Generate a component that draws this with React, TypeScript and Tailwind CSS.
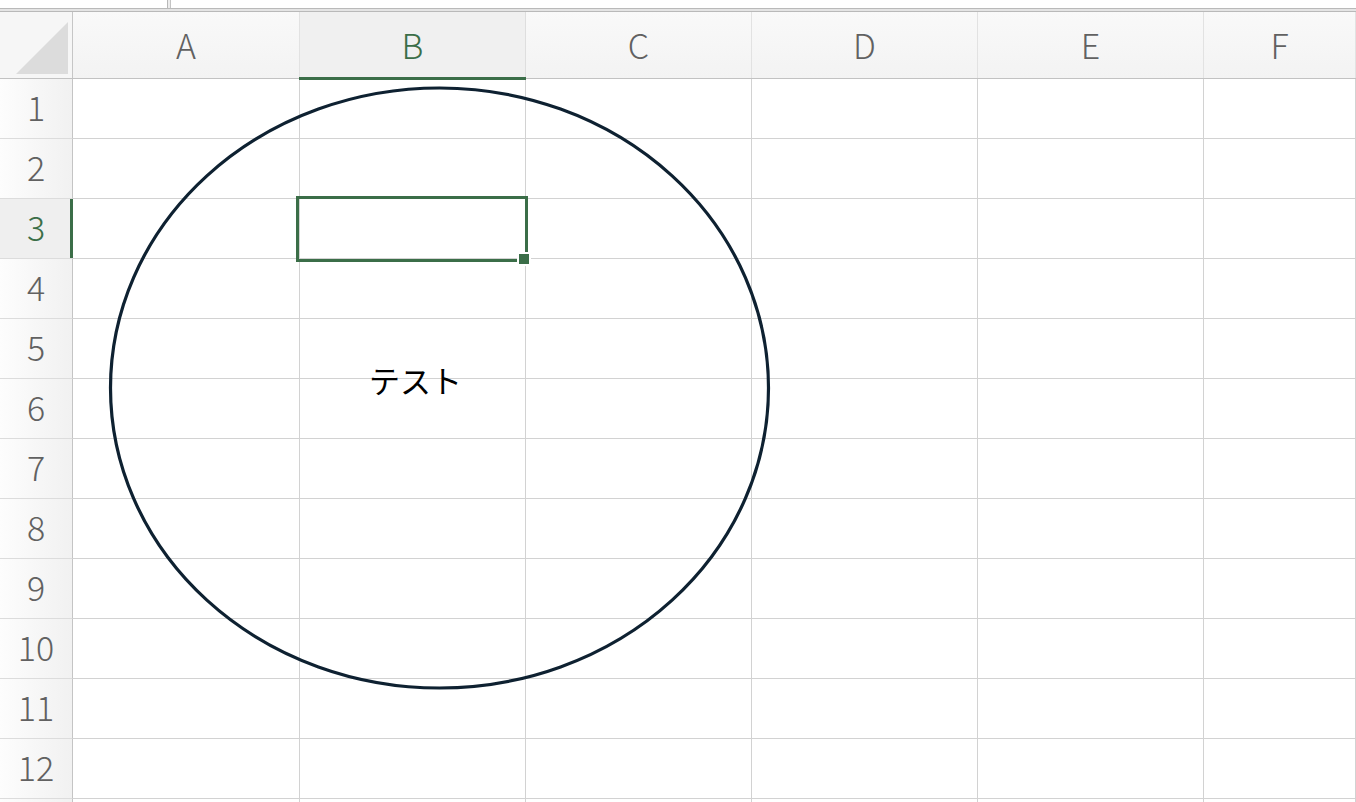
import React from 'react';

const columns = [
    { label: 'A', width: 'w-[227px]' },
    { label: 'B', width: 'w-[226px]' },
    { label: 'C', width: 'w-[226px]' },
    { label: 'D', width: 'w-[226px]' },
    { label: 'E', width: 'w-[226px]' },
    { label: 'F', width: 'flex-1' },
];

const rows = Array.from({ length: 13 }, (_, i) => i + 1);

const selectedCol = 'B';
const selectedRow = 3;

const font = { fontFamily: '"Noto Sans CJK JP", "Noto Sans", sans-serif' };

export default function App() {
    return (
        <div className="relative h-[802px] w-[1356px] overflow-hidden bg-white" style={font}>
            {/* formula bar remnants */}
            <div className="flex h-[8px]">
                <div className="w-[168px] border-r border-[#b8b8b8] bg-white" />
                <div className="w-[2px] bg-[#ececec]" />
                <div className="flex-1 border-l border-[#c4c4c4] bg-white" />
            </div>
            <div className="h-[4px] border-y border-[#b9b9b9] bg-[#e4e4e4]" />

            {/* column header */}
            <div className="flex h-[67px] border-b border-[#c2c2c2]">
                <div className="relative w-[73px] shrink-0 border-r border-[#c6c6c6] bg-[#f6f6f6]">
                    <div className="absolute bottom-[4px] right-[4px] h-0 w-0 border-b-[52px] border-l-[52px] border-b-[#dcdcdc] border-l-transparent" />
                </div>
                {columns.map((c) => {
                    const sel = c.label === selectedCol;
                    return (
                        <div
                            key={c.label}
                            className={`relative flex shrink-0 items-center justify-center border-r pb-[2px] text-[34px] font-light ${c.width} ${
                                sel
                                    ? 'border-[#dedede] bg-[#f0f0f0] text-[#3b6e48]'
                                    : 'border-[#e2e2e2] bg-gradient-to-b from-[#f9f9f9] to-[#f3f3f3] text-[#616161]'
                            }`}
                        >
                            {c.label}
                            {sel && <div className="absolute bottom-[-2px] left-[-1px] right-[-1px] h-[3px] bg-[#3b6e48]" />}
                        </div>
                    );
                })}
            </div>

            {/* rows */}
            {rows.map((r) => {
                const sel = r === selectedRow;
                return (
                    <div key={r} className="flex h-[60px] shrink-0">
                        <div
                            className={`relative flex w-[73px] shrink-0 items-center justify-center border-b border-r border-b-[#dcdcdc] border-r-[#c4c4c4] pb-[5px] text-[34px] font-light ${
                                sel
                                    ? 'bg-[#efefef] text-[#3b6e48]'
                                    : 'bg-gradient-to-r from-[#fdfdfd] to-[#f1f1f1] text-[#616161]'
                            }`}
                        >
                            {r <= 12 ? r : ''}
                            {sel && <div className="absolute bottom-0 right-[-1px] top-0 w-[3px] bg-[#3b6e48]" />}
                        </div>
                        {columns.map((c) => (
                            <div key={c.label} className={`shrink-0 border-b border-r border-[#d2d2d2] ${c.width}`} />
                        ))}
                    </div>
                );
            })}

            {/* selected cell B3 */}
            <div className="absolute left-[296px] top-[196px] h-[66px] w-[232px] border-[3px] border-[#3b6e48]" />
            <div className="absolute left-[517px] top-[252px] h-[14px] w-[14px] border-2 border-white bg-[#3b6e48]" />

            {/* oval shape */}
            <svg className="pointer-events-none absolute left-0 top-0" width="1356" height="802">
                <ellipse cx="439.5" cy="388" rx="329" ry="300" fill="none" stroke="#0e2131" strokeWidth="3.2" />
            </svg>
            <div className="absolute left-[369px] top-[360px] text-[31px] leading-[40px] text-black">テスト</div>
        </div>
    );
}
